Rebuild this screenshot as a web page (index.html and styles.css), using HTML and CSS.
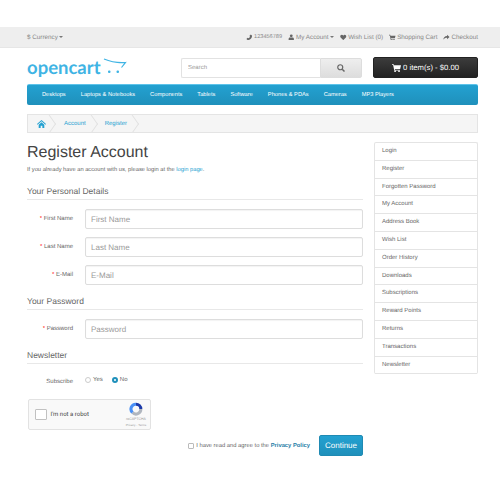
FILE: index.html
```html
<!DOCTYPE html>
<html lang="en">
<head>
    <meta charset="UTF-8">
    <title>Register Account</title>
    <link rel="stylesheet" href="styles.css">
</head>
<body>
    <nav class="top-bar">
        <div class="wrap top-inner">
            <span class="top-link">$ Currency <i class="caret"></i></span>
            <div class="top-links">
                <span class="top-link"><svg class="ico" viewBox="0 0 16 16"><path d="M12 1l3 3c0 6-5 11-11 11l-3-3 3-3 2 1.500c1.500-.8 3-2.300 3.800-3.800L8.500 4z"/></svg><span class="phone">123456789</span></span>
                <span class="top-link"><svg class="ico" viewBox="0 0 16 16"><circle cx="8" cy="4.500" r="3.500"/><path d="M1.500 15v-3c0-2.500 2-3.500 3.500-3.500h6c1.500 0 3.500 1 3.500 3.500v3z"/></svg>My Account <i class="caret"></i></span>
                <span class="top-link"><svg class="ico" viewBox="0 0 16 16"><path d="M8 15L1.500 8.500C-.5 6 1 2 4.500 2 6 2 7.300 3 8 4c.7-1 2-2 3.500-2C15 2 16.500 6 14.500 8.500z"/></svg>Wish List (0)</span>
                <span class="top-link"><svg class="ico" viewBox="0 0 16 16"><path d="M0 2h3l.5 2H16l-1.500 6.500H5l.3 1.500H14v1.500H4L2 3.500H0z"/><circle cx="5.500" cy="14.500" r="1.500"/><circle cx="12.500" cy="14.500" r="1.500"/></svg>Shopping Cart</span>
                <span class="top-link"><svg class="ico" viewBox="0 0 16 16"><path d="M10 2l6 5.500-6 5.500V9.500C6 9.500 3 10.500 1 14c0-5 3-8.500 9-9z"/></svg>Checkout</span>
            </div>
        </div>
    </nav>

    <header class="wrap header">
        <div class="logo">
            <span class="logo-text">opencart</span>
            <svg class="logo-cart" width="24" height="18" viewBox="0 0 24 18">
                <path d="M1 1C8 4 15 5 22.500 4.500L18.500 9.500" fill="none" stroke="#3fb4e4" stroke-width="1.200"/>
                <rect x="5" y="12.500" width="2.500" height="2.500" rx="1" fill="#3fb4e4"/>
                <rect x="13.500" y="12.500" width="2.500" height="2.500" rx="1" fill="#3fb4e4"/>
            </svg>
        </div>
        <div class="search">
            <input class="search-input" type="text" placeholder="Search">
            <button class="search-btn" type="button"><svg width="8" height="8" viewBox="0 0 16 16"><circle cx="6.500" cy="6.500" r="5" fill="none" stroke="#666" stroke-width="2.400"/><path d="M10.500 10.500L15 15" stroke="#666" stroke-width="3"/></svg></button>
        </div>
        <button class="cart-btn" type="button"><svg width="9" height="9" viewBox="0 0 16 16" fill="#fff"><path d="M0 2h3l.5 2H16l-1.500 6.500H5l.3 1.500H14v1.500H4L2 3.500H0z"/><circle cx="5.500" cy="14.500" r="1.500"/><circle cx="12.500" cy="14.500" r="1.500"/></svg> 0 item(s) - $0.00</button>
    </header>

    <div class="wrap">
        <nav class="menu">
            <a>Desktops</a>
            <a>Laptops &amp; Notebooks</a>
            <a>Components</a>
            <a>Tablets</a>
            <a>Software</a>
            <a>Phones &amp; PDAs</a>
            <a>Cameras</a>
            <a>MP3 Players</a>
        </nav>

        <ul class="breadcrumb">
            <li><svg width="9" height="8" viewBox="0 0 16 14" fill="#23a1d1"><path d="M8 0l8 7-1 1.200L8 2.200 1 8.200 0 7z"/><path d="M3 8.500L8 4l5 4.500V14H9.500v-4h-3v4H3z"/></svg></li>
            <li>Account</li>
            <li>Register</li>
        </ul>

        <div class="main">
            <div class="content">
                <h1>Register Account</h1>
                <p class="intro">If you already have an account with us, please login at the <a>login page</a>.</p>
                <form>
                    <h2 class="legend">Your Personal Details</h2>
                    <div class="form-group">
                        <label class="req" for="first">First Name</label>
                        <input id="first" type="text" placeholder="First Name">
                    </div>
                    <div class="form-group">
                        <label class="req" for="last">Last Name</label>
                        <input id="last" type="text" placeholder="Last Name">
                    </div>
                    <div class="form-group">
                        <label class="req" for="email">E-Mail</label>
                        <input id="email" type="text" placeholder="E-Mail">
                    </div>

                    <h2 class="legend">Your Password</h2>
                    <div class="form-group">
                        <label class="req" for="password">Password</label>
                        <input id="password" type="text" placeholder="Password">
                    </div>

                    <h2 class="legend">Newsletter</h2>
                    <div class="form-group subscribe">
                        <label class="sub-label">Subscribe</label>
                        <div class="radios">
                            <span class="radio-item"><i class="radio"></i>Yes</span>
                            <span class="radio-item"><i class="radio on"></i>No</span>
                        </div>
                    </div>

                    <div class="captcha">
                        <i class="captcha-box"></i>
                        <span class="captcha-text">I'm not a robot</span>
                        <div class="captcha-brand">
                            <svg width="14" height="14" viewBox="0 0 16 16" fill="none">
                                <path d="M8 2.500a5.500 5.500 0 0 1 5.500 5.500" stroke="#1c3aa9" stroke-width="3.500"/>
                                <path d="M13.500 8a5.500 5.500 0 0 1-9.500 4" stroke="#b0b6bf" stroke-width="3.500"/>
                                <path d="M4 12A5.500 5.500 0 0 1 8 2.500" stroke="#4a90f5" stroke-width="3.500"/>
                            </svg>
                            <span class="captcha-name">reCAPTCHA</span>
                            <span class="captcha-terms">Privacy - Terms</span>
                        </div>
                    </div>

                    <div class="buttons">
                        <i class="check"></i>
                        <span class="agree">I have read and agree to the <a>Privacy Policy</a></span>
                        <button class="continue" type="button">Continue</button>
                    </div>
                </form>
            </div>

            <aside class="side-list">
                <a>Login</a>
                <a>Register</a>
                <a>Forgotten Password</a>
                <a>My Account</a>
                <a>Address Book</a>
                <a>Wish List</a>
                <a>Order History</a>
                <a>Downloads</a>
                <a>Subscriptions</a>
                <a>Reward Points</a>
                <a>Returns</a>
                <a>Transactions</a>
                <a>Newsletter</a>
            </aside>
        </div>
    </div>
</body>
</html>
```

FILE: styles.css
```css
* {
    box-sizing: border-box;
}
body {
    margin: 0;
    background: #fff;
    font-family: "Liberation Sans", Arial, sans-serif;
    font-size: 6px;
    color: #666;
    text-rendering: geometricPrecision;
}
a {
    color: #23a1d1;
}
.wrap {
    width: 451px;
    margin-left: 27px;
}

/* top bar */
.top-bar {
    margin-top: 27px;
    height: 21px;
    background: #eee;
    border-bottom: 1px solid #e6e6e6;
}
.top-inner {
    display: flex;
    justify-content: space-between;
    align-items: center;
    height: 20px;
}
.top-links {
    display: flex;
    gap: 6px;
}
.top-link {
    display: flex;
    align-items: center;
    gap: 1.500px;
    font-size: 6.300px;
    color: #888;
}
.phone {
    font-size: 5.600px;
}
.ico {
    width: 6.500px;
    height: 6.500px;
    fill: #666;
}
.caret {
    width: 0;
    height: 0;
    border: 2px solid transparent;
    border-top-color: #777;
    border-bottom-width: 0;
}

/* header */
.header {
    display: flex;
    align-items: flex-start;
    height: 36px;
    padding-top: 9px;
}
.logo {
    position: relative;
    width: 154px;
    height: 22px;
}
.logo-text {
    font-family: Lato, sans-serif;
    font-weight: 700;
    font-size: 18.500px;
    line-height: 20px;
    color: #3fb4e4;
}
.logo-cart {
    position: absolute;
    left: 76px;
    top: 1px;
}
.search {
    display: flex;
    width: 181px;
    height: 20px;
    margin-top: 1px;
}
.search-input {
    flex: 1;
    min-width: 0;
    height: 100%;
    padding: 0 6px;
    border: 1px solid #e2e2e2;
    border-right: 0;
    border-radius: 2px 0 0 2px;
    font-family: inherit;
    font-size: 6px;
    text-rendering: geometricPrecision;
}
.search-btn {
    width: 42px;
    height: 100%;
    padding: 0;
    border: 1px solid #ddd;
    border-radius: 0 2px 2px 0;
    background: linear-gradient(#eee, #ddd);
}
.search-btn svg {
    display: block;
    margin: auto;
}
.cart-btn {
    width: 105px;
    height: 21px;
    margin-left: 11px;
    padding: 0;
    border: 1px solid #222;
    border-radius: 2px;
    background: linear-gradient(#3c3c3c, #222);
    font-family: inherit;
    font-size: 7.700px;
    color: #fff;
    text-rendering: geometricPrecision;
}
.cart-btn svg {
    vertical-align: -2px;
}

/* menu */
.menu {
    display: flex;
    gap: 15px;
    height: 21px;
    padding: 0 15px;
    align-items: center;
    background: linear-gradient(#23a1d1, #1f90bb);
    border-top: 1px solid #5ec3ea;
    border-radius: 2px;
}
.menu a {
    font-size: 5.700px;
    color: #fff;
}

/* breadcrumb */
.breadcrumb {
    display: flex;
    height: 19px;
    margin: 9px 0 0;
    padding: 0;
    list-style: none;
    overflow: hidden;
    background: #f5f5f5;
    border: 1px solid #e4e4e4;
    color: #23a1d1;
    font-size: 6px;
}
.breadcrumb li {
    position: relative;
    display: flex;
    align-items: center;
    padding: 0 12px 0 7px;
}
.breadcrumb li:first-child {
    width: 28px;
    padding: 0 0 0 9px;
}
.breadcrumb li:nth-child(2) {
    padding-left: 8px;
}
.breadcrumb li::after {
    content: "";
    position: absolute;
    right: 0;
    top: 2px;
    width: 13px;
    height: 13px;
    border-top: 1px solid #e0e0e0;
    border-right: 1px solid #e0e0e0;
    transform: scaleX(.7) rotate(45deg);
}

/* main columns */
.main {
    display: flex;
    justify-content: space-between;
    align-items: flex-start;
    margin-top: 9px;
}
.content {
    width: 336px;
}
h1 {
    margin: 1px 0 0;
    font-size: 16px;
    line-height: 20px;
    font-weight: 400;
    color: #444;
}
.intro {
    margin: 3px 0 0;
    font-size: 5.750px;
    line-height: 8px;
}
.legend {
    margin: 10px 0 9px;
    padding-bottom: 2px;
    font-size: 8.500px;
    line-height: 12px;
    font-weight: 400;
    color: #666;
    border-bottom: 1px solid #e8e8e8;
}
.intro + form .legend:first-child {
    margin-top: 11px;
}
.form-group {
    display: grid;
    grid-template-columns: 46px 278px;
    column-gap: 12px;
    margin-bottom: 8px;
}
.form-group label {
    text-align: right;
    font-size: 6px;
    line-height: 8px;
    padding-top: 4px;
}
.form-group .req {
    padding-top: 5.500px;
}
.req::before {
    content: "* ";
    color: #f00;
}
.form-group input {
    width: 100%;
    height: 20px;
    padding: 0 5px;
    border: 1px solid #ddd;
    border-radius: 2px;
    font-family: inherit;
    font-size: 8px;
    text-rendering: geometricPrecision;
    box-shadow: inset 0 1px 1px rgba(0,0,0,0.05);
}
input::placeholder {
    color: #999;
}
.subscribe {
    margin: 10.500px 0 16.500px;
    height: 8px;
}
.form-group .sub-label {
    padding-top: 3px;
}
.radios {
    display: flex;
    gap: 9px;
}
.radio-item {
    display: flex;
    align-items: center;
    gap: 2px;
    font-size: 6px;
}
.radio {
    width: 6px;
    height: 6px;
    border: 1px solid #ccc;
    border-radius: 50%;
    background: #fff;
}
.radio.on {
    border: 2px solid #1f90bb;
}

/* recaptcha */
.captcha {
    display: flex;
    align-items: center;
    width: 123px;
    height: 31px;
    margin-left: 1px;
    padding-left: 6px;
    background: #f9f9f9;
    border: 1px solid #e2e2e2;
    border-radius: 2px;
}
.captcha-box {
    width: 11.500px;
    height: 11.500px;
    background: #fff;
    border: 1px solid #c1c1c1;
    border-radius: 1px;
}
.captcha-text {
    margin-left: 4px;
    font-family: Roboto, sans-serif;
    font-size: 6px;
    color: #444;
}
.captcha-brand {
    display: flex;
    flex-direction: column;
    align-items: center;
    margin-left: auto;
    width: 26px;
    padding-right: 2px;
    color: #999;
}
.captcha-name {
    font-size: 3.500px;
    line-height: 4px;
    margin-top: 1px;
}
.captcha-terms {
    font-size: 3px;
    line-height: 4px;
    margin-top: 2px;
}

/* bottom buttons */
.buttons {
    display: flex;
    justify-content: flex-end;
    align-items: center;
    margin-top: 5px;
}
.check {
    width: 6px;
    height: 6px;
    margin-right: 2.500px;
    background: #fff;
    border: 1px solid #bbb;
    border-radius: 1px;
}
.agree {
    font-size: 5.800px;
}
.agree a {
    font-weight: 700;
    color: #2a80a8;
}
.continue {
    width: 44px;
    height: 21px;
    margin-left: 9px;
    padding: 0;
    border: 1px solid #1f8ab3;
    border-radius: 2px;
    background: linear-gradient(#23a1d1, #1f90bb);
    font-family: inherit;
    font-size: 8px;
    color: #fff;
    text-rendering: geometricPrecision;
}

/* right column */
.side-list {
    display: flex;
    flex-direction: column;
    width: 104px;
    border: 1px solid #e4e4e4;
    border-bottom: 0;
    border-radius: 2px;
}
.side-list a {
    height: 17.800px;
    padding-left: 7px;
    font-size: 6px;
    line-height: 17.800px;
    color: #666;
    border-bottom: 1px solid #e4e4e4;
}
```
